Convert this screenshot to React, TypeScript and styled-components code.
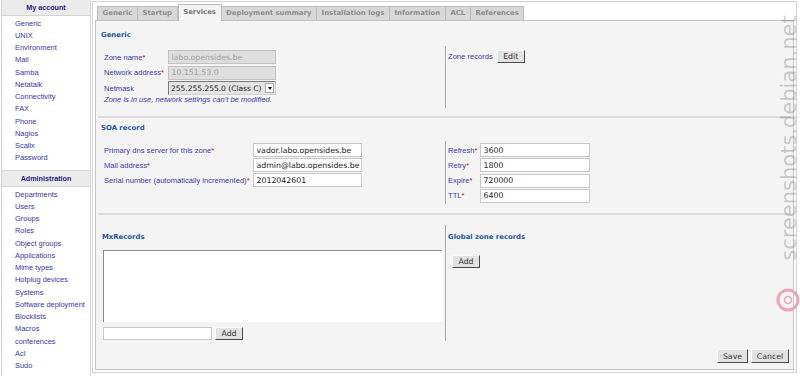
import styled, { createGlobalStyle } from "styled-components";

const GlobalStyle = createGlobalStyle`
  html, body {
    margin: 0;
    padding: 0;
    background: #fff;
  }
  body {
    font-family: "Liberation Sans", Arial, sans-serif;
    overflow: hidden;
  }
`;

const Page = styled.div`
  position: relative;
  width: 800px;
  height: 376px;
  display: flex;
  align-items: flex-start;
  overflow: hidden;
`;

/* ---------- sidebar ---------- */
const Sidebar = styled.nav`
  margin-left: 1px;
  width: 90px;
  height: 380px;
  box-sizing: border-box;
  border: 1px solid #d4d4d4;
  border-top: none;
  background: #fff;
`;
const SideHeader = styled.div<{ $first?: boolean }>`
  margin-top: ${({ $first }) => ($first ? "0" : "5.5px")};
  height: 15px;
  line-height: 15px;
  background: #ebebeb;
  border-top: ${({ $first }) => ($first ? "none" : "1px solid #d4d4d4")};
  border-bottom: 1px solid #d4d4d4;
  text-align: center;
  font-weight: bold;
  font-size: 7.2px;
  color: #1c1c86;
`;
const SideList = styled.ul`
  list-style: none;
  margin: 0;
  padding: 1.5px 0 0 13px;
`;
const SideItem = styled.li`
  font-size: 7.45px;
  line-height: 12.25px;
  color: #3838a8;
  white-space: nowrap;
`;

/* ---------- main ---------- */
const Main = styled.main`
  margin: 1px 0 0 1px;
  width: 705px;
  height: 372px;
  box-sizing: border-box;
  border: 1px solid #d2d2d2;
  padding: 2px;
  display: flex;
  flex-direction: column;
`;
const TabBar = styled.div`
  position: relative;
  z-index: 1;
  display: flex;
  align-items: flex-start;
  height: 17px;
  margin-bottom: -1px;
  padding-left: 2px;
`;
const Tab = styled.div<{ $active?: boolean }>`
  box-sizing: border-box;
  margin-top: ${({ $active }) => ($active ? "0" : "2px")};
  height: ${({ $active }) => ($active ? "17px" : "14px")};
  padding: 0 4.6px;
  line-height: ${({ $active }) => ($active ? "14px" : "13px")};
  background: ${({ $active }) => ($active ? "#f4f4f4" : "#d8d8d8")};
  border: 1px solid #bcbcbc;
  border-bottom: none;
  border-left: ${({ $active }) => ($active ? "1px solid #bcbcbc" : "none")};
  font-family: "DejaVu Sans", sans-serif;
  font-weight: bold;
  font-size: 6.9px;
  color: ${({ $active }) => ($active ? "#777" : "#8c8c8c")};
  white-space: nowrap;
  &:first-child {
    border-left: 1px solid #bcbcbc;
  }
`;
const Panel = styled.section`
  box-sizing: border-box;
  height: 351px;
  border: 1px solid #c4c4c4;
  background: #f4f4f4;
  padding: 0 1px;
  display: flex;
  flex-direction: column;
`;
const SectionTitle = styled.h2<{ $top: number; $left?: number }>`
  margin: ${({ $top }) => $top}px 0 0 ${({ $left }) => $left ?? 4}px;
  font-family: "DejaVu Sans", sans-serif;
  font-weight: bold;
  font-size: 6.9px;
  line-height: 10px;
  color: #2356a0;
`;
const Split = styled.div<{ $top: number; $h: number }>`
  margin-top: ${({ $top }) => $top}px;
  height: ${({ $h }) => $h}px;
  display: grid;
  grid-template-columns: 348px 1fr;
`;
const LeftCell = styled.div<{ $pt: number }>`
  padding: ${({ $pt }) => $pt}px 0 0 7px;
`;
const RightCell = styled.div<{ $pt: number }>`
  border-left: 1px solid #a8a8a8;
  padding: ${({ $pt }) => $pt}px 0 0 2px;
`;
const Separator = styled.hr<{ $top: number }>`
  margin: ${({ $top }) => $top}px 1px 0;
  height: 2px;
  border: none;
  background: #dcdcdc;
`;
const FieldGrid = styled.div<{ $label: number; $gap: number }>`
  display: grid;
  grid-template-columns: ${({ $label }) => $label}px auto;
  grid-auto-rows: 14px;
  row-gap: ${({ $gap }) => $gap}px;
  align-items: center;
  justify-content: start;
`;
const Label = styled.label`
  font-size: 7.6px;
  color: #3838a8;
  white-space: nowrap;
`;
const Star = styled.span`
  color: #d40000;
`;
const Input = styled.input<{ $w: number; $h?: number }>`
  box-sizing: border-box;
  width: ${({ $w }) => $w}px;
  height: ${({ $h }) => $h ?? 14}px;
  margin: 0;
  padding: 0 2.5px;
  border: 1px solid #c8c8c8;
  background: #fff;
  font-family: "DejaVu Sans", sans-serif;
  font-size: 7.8px;
  color: #222;
  outline: none;
  &:disabled {
    background: #dedede;
    border-color: #c2c2c2;
    color: #a0a0a0;
  }
`;
const Select = styled.div`
  box-sizing: border-box;
  width: 108px;
  height: 14px;
  display: flex;
  align-items: center;
  padding: 0 1px 0 2px;
  border: 1px solid;
  border-color: #777 #d0d0d0 #d0d0d0 #777;
  background: #e4e4e4;
  font-family: "DejaVu Sans", sans-serif;
  font-size: 7.5px;
  color: #222;
  white-space: nowrap;
`;
const SelectArrow = styled.span`
  margin-left: auto;
  width: 9px;
  height: 10px;
  box-sizing: border-box;
  display: flex;
  align-items: center;
  justify-content: center;
  background: #fff;
  border: 1px solid #aaa;
  &::after {
    content: "";
    border-left: 2.5px solid transparent;
    border-right: 2.5px solid transparent;
    border-top: 3px solid #111;
  }
`;
const Notice = styled.p`
  margin: 0;
  height: 11px;
  line-height: 10px;
  font-size: 7.6px;
  font-style: italic;
  color: #3838a8;
`;
const Button = styled.button<{ $w: number; $h?: number }>`
  box-sizing: border-box;
  width: ${({ $w }) => $w}px;
  height: ${({ $h }) => $h ?? 14}px;
  margin: 0;
  padding: 0;
  border: 1px solid;
  border-color: #fafafa #4a4a4a #4a4a4a #fafafa;
  background: #e2e2e2;
  font-family: "DejaVu Sans", sans-serif;
  font-size: 7.8px;
  color: #333;
`;
const InlineRow = styled.div<{ $gap: number }>`
  display: flex;
  align-items: center;
  gap: ${({ $gap }) => $gap}px;
`;
const ListBox = styled.div`
  margin: 8px 0 0 -1px;
  width: 339px;
  height: 72px;
  box-sizing: border-box;
  background: #fff;
  border-top: 1px solid #8c8c8c;
  border-left: 1px solid #8c8c8c;
`;
const MxInputRow = styled(InlineRow)`
  margin: 5px 0 0 -1px;
`;
const GlobalAdd = styled.div`
  margin: 8px 0 0 4px;
`;
const Footer = styled.div`
  margin-top: 8px;
  padding-right: 3px;
  display: flex;
  justify-content: flex-end;
  gap: 3px;
`;

/* ---------- watermark ---------- */
const Watermark = styled.div`
  position: absolute;
  left: 789px;
  top: 138px;
  transform: translate(-50%, -50%) rotate(-90deg);
  font-family: "DejaVu Sans", sans-serif;
  font-size: 21px;
  line-height: 1;
  color: rgba(100, 100, 100, 0.32);
  white-space: nowrap;
`;
const Logo = styled.svg`
  position: absolute;
  left: 776px;
  top: 288px;
`;

const accountItems = [
  "Generic", "UNIX", "Environment", "Mail", "Samba", "Netatalk", "Connectivity",
  "FAX", "Phone", "Nagios", "Scalix", "Password",
];
const adminItems = [
  "Departments", "Users", "Groups", "Roles", "Object groups", "Applications",
  "Mime types", "Hotplug devices", "Systems", "Software deployment", "Blocklists",
  "Macros", "conferences", "Acl", "Sudo",
];
const tabs = [
  "Generic", "Startup", "Services", "Deployment summary", "Installation logs",
  "Information", "ACL", "References",
];

const Req = ({ children }: { children: string }) => (
  <Label>
    {children}
    <Star>*</Star>
  </Label>
);

const App = () => {
  return (
    <Page>
      <GlobalStyle />
      <Sidebar>
        <SideHeader $first>My account</SideHeader>
        <SideList>
          {accountItems.map((item) => (
            <SideItem key={item}>{item}</SideItem>
          ))}
        </SideList>
        <SideHeader>Administration</SideHeader>
        <SideList>
          {adminItems.map((item) => (
            <SideItem key={item}>{item}</SideItem>
          ))}
        </SideList>
      </Sidebar>

      <Main>
        <TabBar>
          {tabs.map((t) => (
            <Tab key={t} $active={t === "Services"}>
              {t}
            </Tab>
          ))}
        </TabBar>
        <Panel>
          <SectionTitle $top={9}>Generic</SectionTitle>
          <Split $top={6} $h={62}>
            <LeftCell $pt={4}>
              <FieldGrid $label={64} $gap={1.5}>
                <Req>Zone name</Req>
                <Input $w={108} disabled defaultValue="labo.opensides.be" />
                <Req>Network address</Req>
                <Input $w={108} disabled defaultValue="10.151.53.0" />
                <Label>Netmask</Label>
                <Select>
                  255.255.255.0 (Class C)
                  <SelectArrow />
                </Select>
              </FieldGrid>
              <Notice>Zone is in use, network settings can't be modified.</Notice>
            </LeftCell>
            <RightCell $pt={4}>
              <InlineRow $gap={4}>
                <Label>Zone records</Label>
                <Button $w={28} $h={13}>Edit</Button>
              </InlineRow>
            </RightCell>
          </Split>

          <Separator $top={8} />
          <SectionTitle $top={5}>SOA record</SectionTitle>
          <Split $top={8} $h={63}>
            <LeftCell $pt={2}>
              <FieldGrid $label={149} $gap={1}>
                <Req>Primary dns server for this zone</Req>
                <Input $w={109} defaultValue="vador.labo.opensides.be" />
                <Req>Mail address</Req>
                <Input $w={109} defaultValue="admin@labo.opensides.be" />
                <Req>Serial number (automatically incremented)</Req>
                <Input $w={109} defaultValue="2012042601" />
              </FieldGrid>
            </LeftCell>
            <RightCell $pt={2}>
              <FieldGrid $label={32} $gap={1.3}>
                <Req>Refresh</Req>
                <Input $w={110} defaultValue="3600" />
                <Req>Retry</Req>
                <Input $w={110} defaultValue="1800" />
                <Req>Expire</Req>
                <Input $w={110} defaultValue="720000" />
                <Req>TTL</Req>
                <Input $w={110} defaultValue="6400" />
              </FieldGrid>
            </RightCell>
          </Split>

          <Separator $top={9} />
          <Split $top={10} $h={116}>
            <LeftCell $pt={0}>
              <SectionTitle $top={7} $left={-2}>
                MxRecords
              </SectionTitle>
              <ListBox />
              <MxInputRow $gap={3}>
                <Input $w={109} $h={13} />
                <Button $w={28} $h={13}>Add</Button>
              </MxInputRow>
            </LeftCell>
            <RightCell $pt={0}>
              <SectionTitle $top={7} $left={0}>
                Global zone records
              </SectionTitle>
              <GlobalAdd>
                <Button $w={28} $h={13}>Add</Button>
              </GlobalAdd>
            </RightCell>
          </Split>

          <Footer>
            <Button $w={31}>Save</Button>
            <Button $w={38}>Cancel</Button>
          </Footer>
        </Panel>
      </Main>

      <Watermark>screenshots.debian.net</Watermark>
      <Logo width="24" height="24" viewBox="0 0 24 24">
        <circle cx="12" cy="12" r="10" fill="none" stroke="#eaa6b8" strokeWidth="3" />
        <circle cx="12" cy="12" r="3.5" fill="none" stroke="#eaa6b8" strokeWidth="1.5" />
      </Logo>
    </Page>
  );
};

export default App;
